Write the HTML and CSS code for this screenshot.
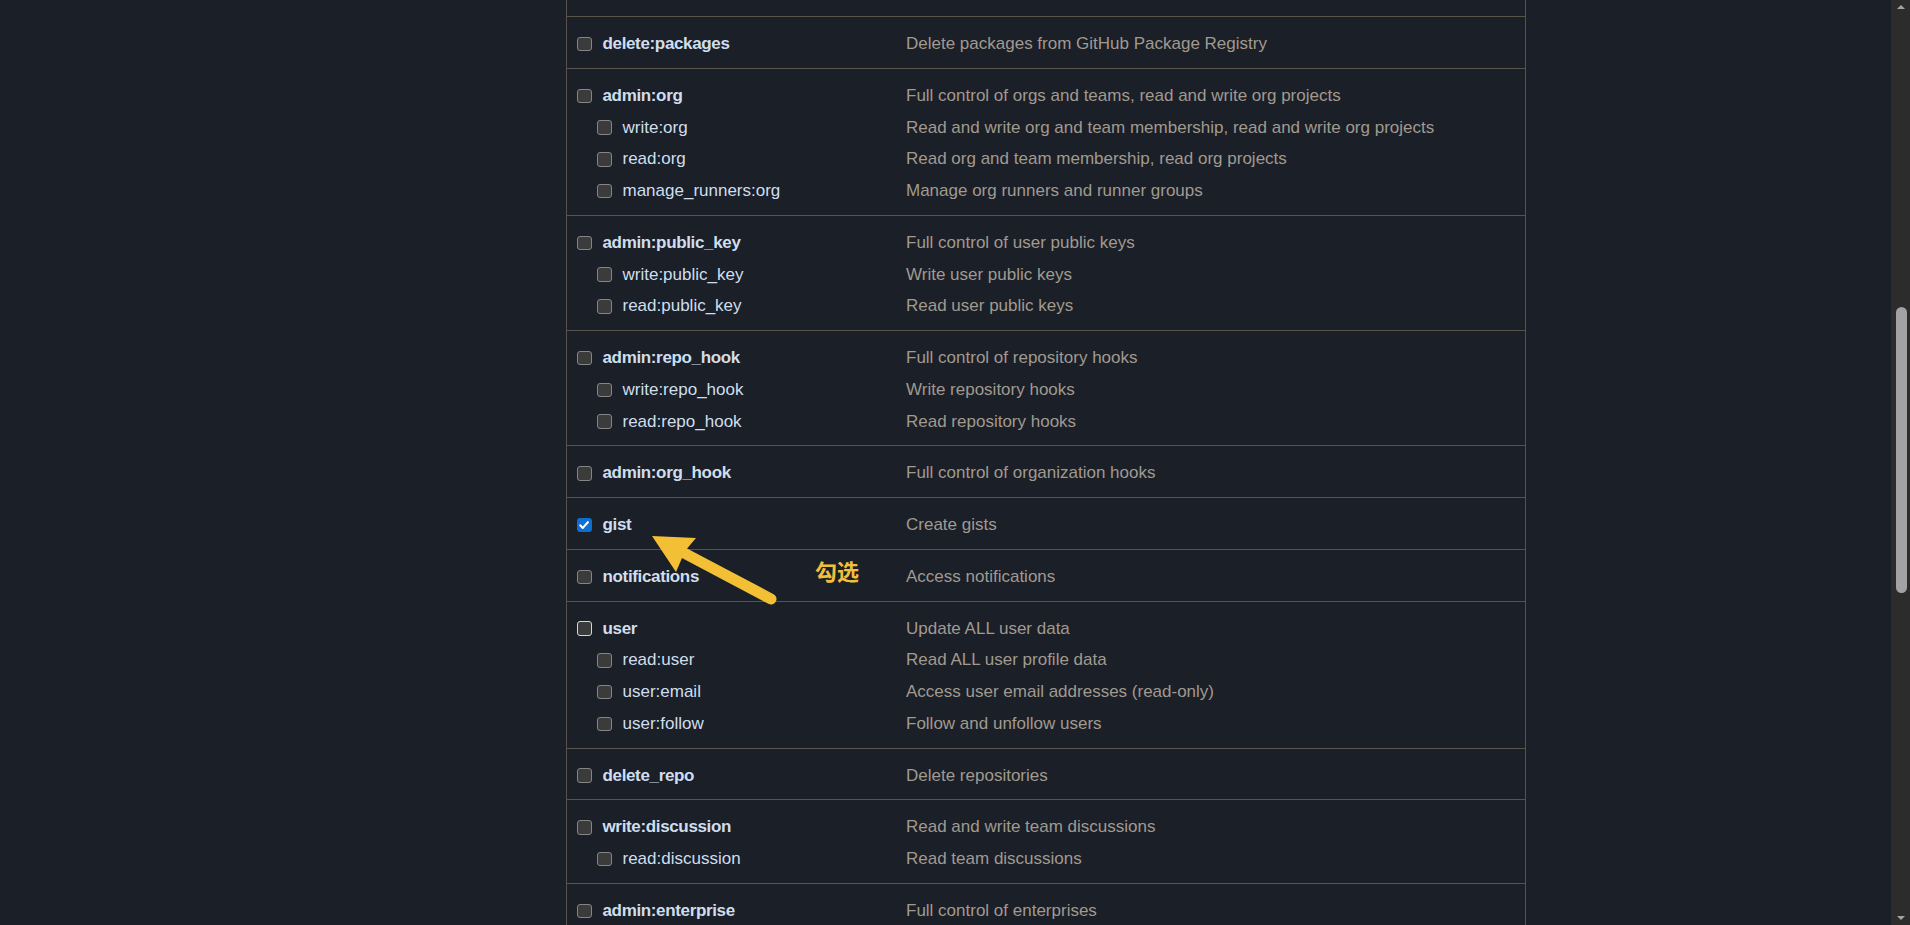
FILE: index.html
```html
<!DOCTYPE html>
<html lang="en">
<head>
<meta charset="utf-8">
<title>Token scopes</title>
<link rel="stylesheet" href="styles.css">
</head>
<body>
<div class="page">
  <main class="content">
    <div class="scopes">
      <div class="group">
        <div class="line"><div class="label"><span class="cb"></span><b>write:packages</b></div><div class="desc">Upload packages to GitHub Package Registry</div></div>
        <div class="line sub"><div class="label"><span class="cb"></span><span>read:packages</span></div><div class="desc">Download packages from GitHub Package Registry</div></div>
      </div>
      <div class="group">
        <div class="line"><div class="label"><span class="cb"></span><b>delete:packages</b></div><div class="desc">Delete packages from GitHub Package Registry</div></div>
      </div>
      <div class="group">
        <div class="line"><div class="label"><span class="cb"></span><b>admin:org</b></div><div class="desc">Full control of orgs and teams, read and write org projects</div></div>
        <div class="line sub"><div class="label"><span class="cb"></span><span>write:org</span></div><div class="desc">Read and write org and team membership, read and write org projects</div></div>
        <div class="line sub"><div class="label"><span class="cb"></span><span>read:org</span></div><div class="desc">Read org and team membership, read org projects</div></div>
        <div class="line sub"><div class="label"><span class="cb"></span><span>manage_runners:org</span></div><div class="desc">Manage org runners and runner groups</div></div>
      </div>
      <div class="group">
        <div class="line"><div class="label"><span class="cb"></span><b>admin:public_key</b></div><div class="desc">Full control of user public keys</div></div>
        <div class="line sub"><div class="label"><span class="cb"></span><span>write:public_key</span></div><div class="desc">Write user public keys</div></div>
        <div class="line sub"><div class="label"><span class="cb"></span><span>read:public_key</span></div><div class="desc">Read user public keys</div></div>
      </div>
      <div class="group">
        <div class="line"><div class="label"><span class="cb"></span><b>admin:repo_hook</b></div><div class="desc">Full control of repository hooks</div></div>
        <div class="line sub"><div class="label"><span class="cb"></span><span>write:repo_hook</span></div><div class="desc">Write repository hooks</div></div>
        <div class="line sub"><div class="label"><span class="cb"></span><span>read:repo_hook</span></div><div class="desc">Read repository hooks</div></div>
      </div>
      <div class="group">
        <div class="line"><div class="label"><span class="cb"></span><b>admin:org_hook</b></div><div class="desc">Full control of organization hooks</div></div>
      </div>
      <div class="group">
        <div class="line"><div class="label"><span class="cb checked"><svg viewBox="0 0 14 14" width="14" height="14"><path d="M3.2 7.3 L5.8 9.9 L10.9 4.2" fill="none" stroke="#ffffff" stroke-width="2.1" stroke-linecap="round" stroke-linejoin="round"/></svg></span><b>gist</b></div><div class="desc">Create gists</div></div>
      </div>
      <div class="group">
        <div class="line"><div class="label"><span class="cb"></span><b>notifications</b></div><div class="desc">Access notifications</div></div>
      </div>
      <div class="group">
        <div class="line"><div class="label"><span class="cb focus"></span><b>user</b></div><div class="desc">Update ALL user data</div></div>
        <div class="line sub"><div class="label"><span class="cb"></span><span>read:user</span></div><div class="desc">Read ALL user profile data</div></div>
        <div class="line sub"><div class="label"><span class="cb"></span><span>user:email</span></div><div class="desc">Access user email addresses (read-only)</div></div>
        <div class="line sub"><div class="label"><span class="cb"></span><span>user:follow</span></div><div class="desc">Follow and unfollow users</div></div>
      </div>
      <div class="group">
        <div class="line"><div class="label"><span class="cb"></span><b>delete_repo</b></div><div class="desc">Delete repositories</div></div>
      </div>
      <div class="group">
        <div class="line"><div class="label"><span class="cb"></span><b>write:discussion</b></div><div class="desc">Read and write team discussions</div></div>
        <div class="line sub"><div class="label"><span class="cb"></span><span>read:discussion</span></div><div class="desc">Read team discussions</div></div>
      </div>
      <div class="group">
        <div class="line"><div class="label"><span class="cb"></span><b>admin:enterprise</b></div><div class="desc">Full control of enterprises</div></div>
        <div class="line sub"><div class="label"><span class="cb"></span><span>manage_runners:enterprise</span></div><div class="desc">Manage enterprise runners and runner groups</div></div>
        <div class="line sub"><div class="label"><span class="cb"></span><span>manage_billing:enterprise</span></div><div class="desc">Read and write enterprise billing data</div></div>
      </div>
    </div>

    <svg class="arrow" width="1891" height="925" viewBox="0 0 1891 925" aria-hidden="true">
      <line x1="684" y1="553" x2="771" y2="599" stroke="#f2bf35" stroke-width="11" stroke-linecap="round"/>
      <polygon points="652,536 696,538 685,551 676,572" fill="#f2bf35"/>
    </svg>
    <span class="note">勾选</span>
  </main>
  <div class="scrollbar">
    <span class="sb-up"></span>
    <span class="sb-thumb"></span>
    <span class="sb-fill"></span>
    <span class="sb-down"></span>
  </div>
</div>
</body>
</html>
```

FILE: styles.css
```css
html, body {
  margin: 0;
  padding: 0;
  height: 100%;
  overflow: hidden;
  background: #1a1f28;
}

body {
  font-family: "Liberation Sans", Arial, sans-serif;
  font-size: 17px;
  color: #cfdeed;
}

.page {
  display: flex;
  height: 925px;
}

.content {
  flex: 1;
  position: relative;
  overflow: hidden;
}

.scopes {
  width: 958px;
  margin-left: 566px;
  margin-top: -65.5px;
  min-height: 1200px;
  border-left: 1px solid #58544c;
  border-right: 1px solid #58544c;
}

.group {
  padding: 9.5px 0;
  border-bottom: 1px solid #58544c;
}

.group:first-child {
  padding-top: 8.5px;
}

.line {
  display: grid;
  grid-template-columns: 339px 1fr;
  align-items: center;
  height: 31.75px;
  padding-top: 3.5px;
  box-sizing: border-box;
  white-space: nowrap;
}

.label {
  display: flex;
  align-items: center;
  gap: 11px;
  padding-left: 10px;
  color: #cfdeed;
}

.label b {
  font-weight: 700;
  letter-spacing: -0.35px;
}

.line.sub .label {
  padding-left: 30px;
}

.desc {
  color: #a19a8f;
}

.cb {
  flex: none;
  width: 14.5px;
  height: 14.5px;
  box-sizing: border-box;
  border: 1px solid #858585;
  background: #3b3b3b;
  border-radius: 3px;
  display: flex;
}

.cb.focus {
  border: 1.5px solid #d6d6d6;
}

.cb.checked {
  border: none;
  background: #0b6fd6;
}

.cb svg {
  display: block;
}

.arrow {
  position: absolute;
  left: 0;
  top: 0;
  pointer-events: none;
}

.note {
  position: absolute;
  left: 815px;
  top: 559px;
  font-family: "Noto Sans CJK SC", "Noto Sans CJK JP", sans-serif;
  font-size: 22px;
  line-height: 1;
  font-weight: 700;
  color: #f0c03c;
}

.scrollbar {
  width: 19px;
  flex: none;
  background: #2c2c2c;
  display: flex;
  flex-direction: column;
  align-items: center;
}

.sb-up,
.sb-down {
  flex: none;
  width: 0;
  height: 0;
  border-left: 4px solid transparent;
  border-right: 4px solid transparent;
}

.sb-up {
  margin-top: 5px;
  border-bottom: 4px solid #a3a3a3;
}

.sb-down {
  margin-bottom: 5px;
  border-top: 4px solid #a3a3a3;
}

.sb-thumb {
  flex: none;
  width: 11px;
  height: 286px;
  margin-top: 298px;
  margin-left: 1px;
  border-radius: 6px;
  background: #a2a2a4;
}

.sb-fill {
  flex: 1;
}
```
